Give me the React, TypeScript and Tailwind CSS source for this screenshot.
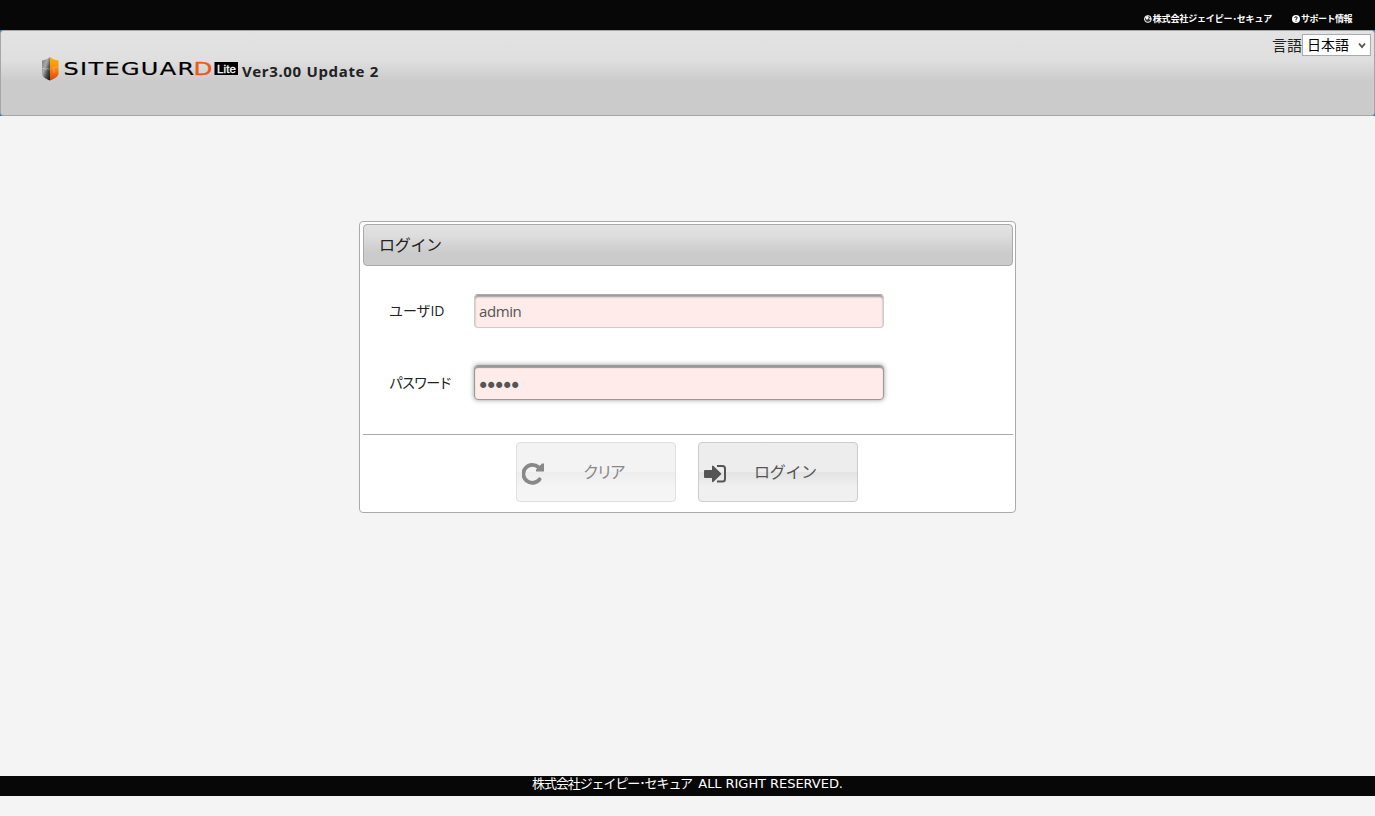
import { useState } from "react";
import type { ReactNode } from "react";

const JP = "font-['Open_Sans','Noto_Sans_CJK_JP',sans-serif]";

function Logo() {
  return (
    <svg width="198" height="26" viewBox="0 0 198 26" className="block">
      <defs>
        <linearGradient id="steel" x1="0" y1="0" x2="1" y2="1">
          <stop offset="0" stopColor="#777" />
          <stop offset="0.4" stopColor="#aaa" />
          <stop offset="0.65" stopColor="#555" />
          <stop offset="1" stopColor="#111" />
        </linearGradient>
        <linearGradient id="flame" x1="0" y1="0" x2="0" y2="1">
          <stop offset="0" stopColor="#ffb400" />
          <stop offset="0.5" stopColor="#f78a0c" />
          <stop offset="1" stopColor="#e33d0c" />
        </linearGradient>
      </defs>
      <path d="M10 1C8 3 5 4 2 4.500V18C2 21 6 23 10 24.500Z" fill="url(#steel)" />
      <path d="M10 1C12 3 15 4 18.500 4.500V18C18 21 14 23 10 24.500Z" fill="url(#flame)" />
      <path d="M2 12.500h3l1 1.500 1-2 1 1h2M14 17v-6l-1 1M15 11h3" stroke="#ddd" strokeOpacity="0.5" strokeWidth="0.7" fill="none" />
      <text x="23.500" y="19.300" fontSize="18" textLength="132" lengthAdjust="spacingAndGlyphs" fill="#000" stroke="#000" strokeWidth="0.2" className="font-['DejaVu_Sans',sans-serif] tracking-[1px]">
        SITEGUAR
      </text>
      <text x="153.500" y="19.300" fontSize="18" textLength="19" lengthAdjust="spacingAndGlyphs" fill="#ee5a13" stroke="#ee5a13" strokeWidth="0.3" className="font-['DejaVu_Sans',sans-serif]">
        D
      </text>
      <rect x="174.500" y="6" width="23.500" height="13" fill="#000" />
      <text x="177" y="16.500" fontSize="11.500" fill="#fff" stroke="#fff" strokeWidth="0.3" textLength="19" className="font-['Liberation_Sans',sans-serif]">
        Lite
      </text>
    </svg>
  );
}

function GlobeIcon() {
  return (
    <svg width="8" height="8" viewBox="0 0 8 8">
      <circle cx="4" cy="4" r="3.500" fill="#333" stroke="#fff" />
      <path d="M1 2l3-1 1 2-2 2zM5 4l2-2v3z" fill="#fff" />
    </svg>
  );
}

function HelpIcon() {
  return (
    <svg width="8" height="8" viewBox="0 0 8 8">
      <circle cx="4" cy="4" r="4" fill="#fff" />
      <path d="M2.700 3q0-1.200 1.300-1.200T5.300 3Q5.300 3.600 4 4.200V5M4 5.600v1" stroke="#111" fill="none" />
    </svg>
  );
}

function ClearIcon() {
  return (
    <svg width="23" height="23" viewBox="0 0 23 23">
      <path d="M17.500 17.300A9 9 0 1 1 16.500 5.200" fill="none" stroke="currentColor" strokeWidth="3.800" strokeLinecap="round" />
      <path d="M22 1.500V9.500H14V7.500L20 1.500Z" fill="currentColor" />
    </svg>
  );
}

function LoginIcon() {
  return (
    <svg width="23" height="20" viewBox="0 0 23 20">
      <path d="M1 6H8V2.500Q8 .8 9.500 2L17 9.200Q17.600 9.900 17 10.600L9.500 17.800Q8 19 8 17.200V14H1Q0 14 0 13V7Q0 6 1 6Z" fill="currentColor" />
      <path d="M13 2H18.500Q21 2 21 4.500V15Q21 17.500 18.500 17.500H13" fill="none" stroke="currentColor" strokeWidth="2" />
    </svg>
  );
}

function Row({ label, children }: { label: ReactNode; children: ReactNode }) {
  return (
    <div className="flex h-9 items-center">
      <label className="w-[85px] whitespace-nowrap text-sm text-[#222]">{label}</label>
      {children}
    </div>
  );
}

export default function App() {
  const [user, setUser] = useState("admin");
  const [password, setPassword] = useState("admin");

  return (
    <div className={`flex h-[816px] flex-col bg-[#f4f4f4] text-[#222] ${JP}`}>
      <nav className="flex h-[30px] shrink-0 items-start justify-end gap-5 bg-[#070707] pr-[23px] pt-[13px] text-[9px] font-bold leading-[11px] text-white">
        <a className="flex w-32 items-center gap-px whitespace-nowrap">
          <GlobeIcon />
          <span className="tracking-[-0.15px]">株式会社ジェイピー･セキュア</span>
        </a>
        <a className="flex w-[60px] items-center gap-px whitespace-nowrap">
          <HelpIcon />
          <span className="tracking-[-0.5px]">サポート情報</span>
        </a>
      </nav>

      <div className="h-[86px] shrink-0 bg-[#0b80c6]">
        <header className="flex h-full justify-between rounded-[3px] border border-[#a6a6a6] bg-linear-to-b from-[#e3e3e3] via-[#dfdfdf] via-35% to-[#cbcbcb] to-60% pl-[39px] pr-[3px]">
          <div className="flex items-start pt-[25px]">
            <Logo />
            <span className="ml-1 mt-1 whitespace-nowrap font-['Noto_Sans',sans-serif] text-[15px] font-bold leading-[22px] tracking-[0.68px]">
              Ver3.00 Update 2
            </span>
          </div>
          <div className="mt-[3px] flex h-[22px] items-center">
            <span className="text-[15px] leading-[22px]">言語</span>
            <div className="flex h-[22px] w-[69px] items-center justify-between border border-[#a9a9b0] bg-white pl-1 pr-1 text-sm text-black">
              <span>日本語</span>
              <svg width="8" height="7" viewBox="0 0 8 7">
                <path d="M1 1.500L4 5L7 1.500" fill="none" stroke="#555" strokeWidth="1.900" />
              </svg>
            </div>
          </div>
        </header>
      </div>

      <main className="flex flex-1 items-start justify-center pt-[105px]">
        <form className="h-[292px] w-[657px] rounded-[4px] border border-[#aaa] bg-white pl-[3px] pr-[2px] pt-[2px]" onSubmit={(e) => e.preventDefault()}>
          <h1 className="flex h-[42px] items-center rounded-[4px] border border-[#aaa] bg-linear-to-b from-[#e3e3e3] via-[#dcdcdc] via-30% to-[#cbcbcb] to-70% pl-[15px] text-base leading-none">
            <span className="-mt-px tracking-[-0.3px]">ログイン</span>
          </h1>
          <div className="flex h-[169px] flex-col gap-9 border-b border-[#aaa] pl-[26px] pt-[27px]">
            <Row label={<span className="tracking-[-0.1px]">ユーザID</span>}>
              <input
                value={user}
                onChange={(e) => setUser(e.target.value)}
                className="h-[34px] w-[410px] rounded-[4px] border border-[#ccc] border-t-[#aaa] bg-[#ffebe9] px-1 text-[15px] tracking-[-0.4px] text-[#555] shadow-[inset_0_2px_2px_#999] outline-none"
              />
            </Row>
            <Row label={<span className="tracking-[-1.6px]">パスワード</span>}>
              <input
                type="password"
                value={password}
                onChange={(e) => setPassword(e.target.value)}
                className="-mt-px h-[35px] w-[410px] rounded-[4px] border border-[#999] bg-[#ffebe9] pl-0.5 pr-1 pt-1.5 font-['DejaVu_Sans',sans-serif] text-[21px] tracking-[-4.4px] text-[#555] shadow-[inset_0_2px_1px_#999,0_0_5px_#999] outline-none"
              />
            </Row>
          </div>
          <div className="flex gap-[22px] pl-[153px] pt-[7px] text-base text-[#555]">
            <button type="button" disabled className="flex h-[60px] w-40 items-center rounded-[4px] border border-[#e0e0e0] bg-linear-to-b from-[#f3f3f3] from-50% via-[#ededed] via-51% to-[#f5f5f5] to-75% pl-[5px] text-[#888]">
              <span className="mt-[3px]"><ClearIcon /></span>
              <span className="ml-[38px] tracking-[-2.6px]">クリア</span>
            </button>
            <button type="submit" className="flex h-[60px] w-40 items-center rounded-[4px] border border-[#ccc] bg-linear-to-b from-[#ededed] from-50% via-[#e3e3e3] via-51% to-[#f0f0f0] to-75% pl-[5px]">
              <span className="mt-[3px]"><LoginIcon /></span>
              <span className="ml-[27px] tracking-[-0.3px]">ログイン</span>
            </button>
          </div>
        </form>
      </main>

      <footer className="mb-5 flex h-5 shrink-0 justify-center whitespace-pre bg-[#070707] text-[13px] leading-4 text-white">
        <span className="-mt-px tracking-[-1.1px]">株式会社ジェイピー･セキュア </span>
        <span className="font-['DejaVu_Sans',sans-serif] tracking-[-0.05px]"> ALL RIGHT RESERVED.</span>
      </footer>
    </div>
  );
}
